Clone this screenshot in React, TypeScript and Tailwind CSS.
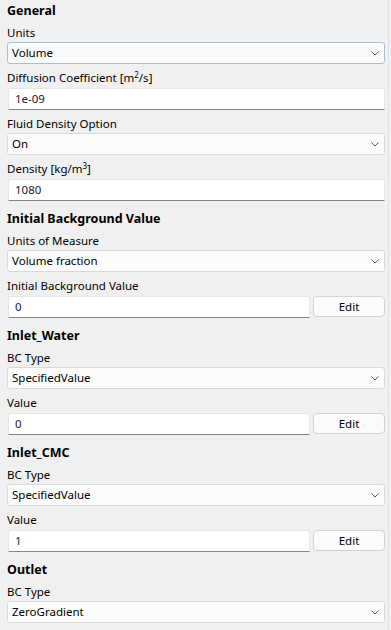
import type { ReactNode } from "react";

const FONT = "font-['Segoe_UI','Noto_Sans',sans-serif]";

function Chevron() {
    return (
        <svg width="8" height="5" viewBox="0 0 8 5" className="shrink-0">
            <path d="M0.5 0.5 L4 4 L7.5 0.5" fill="none" stroke="#5a5a5a" strokeWidth="1" />
        </svg>
    );
}

function Heading({ children }: { children: ReactNode }) {
    return <div className="flex h-[20px] items-center text-[12.5px] font-bold text-black">{children}</div>;
}

function Label({ children }: { children: ReactNode }) {
    return <div className="flex h-[18px] items-center text-[11.5px] text-black">{children}</div>;
}

function Combo({ value, focused }: { value: string; focused?: boolean }) {
    return (
        <div
            className={`flex h-[22px] items-center justify-between rounded-[3px] border pl-[4px] pr-[5px] text-[11.5px] text-black ${
                focused ? "border-[#a6c0d8] bg-[#f8fafc]" : "border-[#d9d9d9] bg-[#fcfcfc]"
            }`}
        >
            <span>{value}</span>
            <Chevron />
        </div>
    );
}

function TextInput({ value }: { value: string }) {
    return (
        <div className="flex h-[22px] flex-1 items-center rounded-t-[3px] border border-b-[#858585] border-x-[#e6e6e6] border-t-[#e6e6e6] bg-white pl-[6px] text-[11.5px] text-[#1a1a3a]">
            {value}
        </div>
    );
}

function PlainInput({ value }: { value: string }) {
    return (
        <div className="flex pl-[1px] pt-[1px]">
            <TextInput value={value} />
        </div>
    );
}

function EditInput({ value }: { value: string }) {
    return (
        <div className="flex items-start gap-[3px] pt-[1px]">
            <div className="flex flex-1 pl-[1px]">
                <TextInput value={value} />
            </div>
            <button className="flex h-[21px] w-[72px] items-center justify-center rounded-[4px] border border-[#d3d3d3] bg-[#fbfbfb] text-[11.5px] text-black">
                Edit
            </button>
        </div>
    );
}

function Field({ label, children }: { label: ReactNode; children: ReactNode }) {
    return (
        <div className="flex flex-col">
            <Label>{label}</Label>
            {children}
        </div>
    );
}

function Section({ title, children }: { title: string; children: ReactNode }) {
    return (
        <div className="flex flex-col">
            <Heading>{title}</Heading>
            <div className="mt-[3px] flex flex-col gap-[5px]">{children}</div>
        </div>
    );
}

export default function App() {
    return (
        <div className={`h-[630px] w-[391px] overflow-hidden bg-[#f0f0f0] ${FONT}`}>
            <div className="flex h-full w-[389px] border-r border-[#e3e3e3]">
                <div className="flex w-full flex-col gap-[8px] pl-[7px] pr-[3px] pt-[1px]">
                    <Section title="General">
                        <Field label="Units">
                            <Combo value="Volume" focused />
                        </Field>
                        <Field
                            label={
                                <span>
                                    Diffusion Coefficient [m<sup className="text-[8px]">2</sup>/s]
                                </span>
                            }
                        >
                            <PlainInput value="1e-09" />
                        </Field>
                        <Field label="Fluid Density Option">
                            <Combo value="On" />
                        </Field>
                        <Field
                            label={
                                <span>
                                    Density [kg/m<sup className="text-[8px]">3</sup>]
                                </span>
                            }
                        >
                            <PlainInput value="1080" />
                        </Field>
                    </Section>

                    <Section title="Initial Background Value">
                        <Field label="Units of Measure">
                            <Combo value="Volume fraction" />
                        </Field>
                        <Field label="Initial Background Value">
                            <EditInput value="0" />
                        </Field>
                    </Section>

                    <Section title="Inlet_Water">
                        <Field label="BC Type">
                            <Combo value="SpecifiedValue" />
                        </Field>
                        <Field label="Value">
                            <EditInput value="0" />
                        </Field>
                    </Section>

                    <Section title="Inlet_CMC">
                        <Field label="BC Type">
                            <Combo value="SpecifiedValue" />
                        </Field>
                        <Field label="Value">
                            <EditInput value="1" />
                        </Field>
                    </Section>

                    <Section title="Outlet">
                        <Field label="BC Type">
                            <Combo value="ZeroGradient" />
                        </Field>
                    </Section>
                </div>
            </div>
        </div>
    );
}
